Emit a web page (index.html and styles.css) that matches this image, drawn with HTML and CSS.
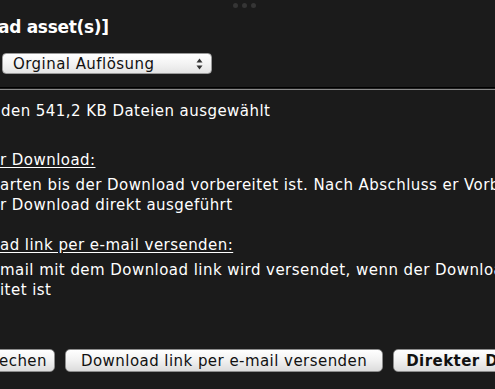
FILE: index.html
```html
<!DOCTYPE html>
<html lang="de">
<head>
    <meta charset="UTF-8">
    <meta name="viewport" content="width=device-width, initial-scale=1.0">
    <title>Download asset(s)</title>
    <link rel="stylesheet" href="styles.css">
</head>
<body>
    <div class="dialog">
        <div class="grip">
            <span></span><span></span><span></span>
        </div>

        <h2 class="title">ad asset(s)]</h2>

        <div class="size-row">
            <div class="popup">
                <span>Orginal Auflösung</span>
                <svg class="popup-arrows" width="7" height="12" viewBox="0 0 7 12">
                    <path d="M3.5 0.5 L6.5 4.5 L0.5 4.5 Z" fill="#333"/>
                    <path d="M3.5 11.5 L6.5 7.5 L0.5 7.5 Z" fill="#333"/>
                </svg>
            </div>
        </div>

        <hr class="divider">

        <p class="summary">den 541,2 KB Dateien ausgewählt</p>

        <div class="option">
            <h3 class="option-title">r Download:</h3>
            <p>arten bis der Download vorbereitet ist. Nach Abschluss er Vorbereitung wird<br>r Download direkt ausgeführt</p>
        </div>

        <div class="option">
            <h3 class="option-title">ad link per e-mail versenden:</h3>
            <p>mail mit dem Download link wird versendet, wenn der Download bereit<br>itet ist</p>
        </div>

        <div class="buttons">
            <button class="btn btn-cancel">echen</button>
            <button class="btn btn-mail">Download link per e-mail versenden</button>
            <button class="btn btn-default">Direkter Download</button>
        </div>
    </div>
</body>
</html>
```

FILE: styles.css
```css
* {
    margin: 0;
    padding: 0;
    box-sizing: border-box;
}

html, body {
    width: 495px;
    height: 389px;
    overflow: hidden;
}

body {
    font-family: 'DejaVu Sans', Verdana, sans-serif;
    font-size: 15px;
    letter-spacing: 0.45px;
    line-height: 20px;
    background: #1b1b1b;
    color: #fff;
}

.dialog {
    white-space: nowrap;
}

.grip {
    height: 10px;
    display: flex;
    justify-content: center;
    align-items: center;
    gap: 4px;
    padding-right: 6px;
}

.grip span {
    width: 5px;
    height: 5px;
    border-radius: 50%;
    background: #353535;
}

.title {
    margin-top: 6px;
    margin-left: -2px;
    font-size: 17px;
    letter-spacing: -0.3px;
    line-height: 22px;
    font-weight: bold;
}

.size-row {
    margin-top: 15px;
    padding-left: 2px;
}

.popup {
    width: 210px;
    height: 21px;
    display: flex;
    align-items: center;
    justify-content: space-between;
    padding: 0 8px 0 10px;
    background: linear-gradient(#ffffff, #f3f3f3 50%, #e4e4e4);
    border: 1px solid #9a9a9a;
    border-radius: 4px;
    color: #111;
}

.divider {
    margin-top: 13px;
    height: 3px;
    border: none;
    border-top: 1px solid #000;
    border-bottom: 1px solid #8a8a8a;
}

.summary {
    margin-top: 11px;
    padding-left: 1px;
}

.option {
    margin-top: 29px;
}

.option + .option {
    margin-top: 20px;
}

.option-title {
    font-size: 15px;
    font-weight: normal;
    text-decoration: underline;
    text-underline-offset: 2px;
    margin-bottom: 5px;
}

.buttons {
    margin-top: 49px;
    display: flex;
    gap: 10px;
}

.btn {
    flex: none;
    height: 23px;
    padding: 0 12px;
    font-family: inherit;
    font-size: 15px;
    letter-spacing: 0.45px;
    color: #111;
    background: linear-gradient(#ffffff, #f1f1f1 50%, #dcdcdc);
    border: 1px solid #8c8c8c;
    border-radius: 5px;
}

.btn-cancel {
    margin-left: -14px;
    padding: 0 7px 0 12px;
}

.btn-mail {
    padding: 0 15px;
}

.btn-default {
    font-weight: bold;
}
```
